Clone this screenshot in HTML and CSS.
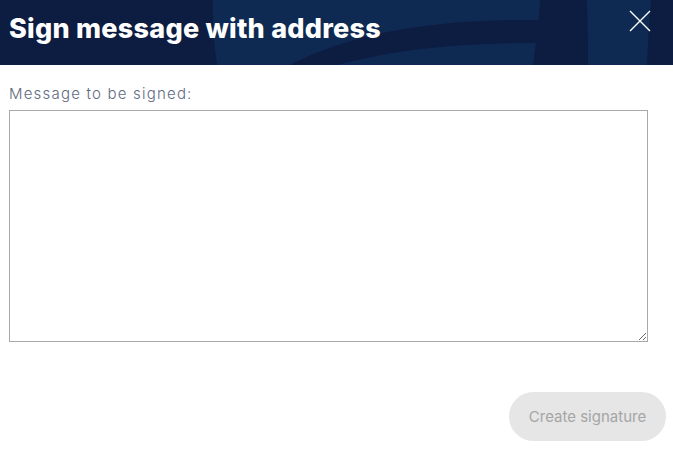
FILE: index.html
```html
<!DOCTYPE html>
<html>
<head>
<meta charset="utf-8">
<link rel="stylesheet" href="styles.css">
</head>
<body>
<div class="modal">
  <header class="modal-header">
    <svg class="header-bg" viewBox="0 0 673 65" preserveAspectRatio="none" aria-hidden="true">
      <path class="light" d="M213 0 H651 Q648 35 647 65 H217 Q212 30 213 0 Z"/>
      <path class="dark" d="M540 0 H587 Q588 35 588 65 H533 Q538 30 540 0 Z"/>
      <path class="dark" d="M290 65 Q380 18 540 20 L540 43 Q420 42 337 65 Z"/>
    </svg>
    <h1 class="title">Sign message with address</h1>
    <button class="close" aria-label="Close">
      <svg viewBox="0 0 22 22" width="22" height="22"><path d="M1 1 L21 21 M21 1 L1 21" stroke="#fff" stroke-width="1.4" fill="none"/></svg>
    </button>
  </header>
  <main class="modal-body">
    <label class="label" for="msg">Message to be signed:</label>
    <textarea id="msg" class="message"></textarea>
    <div class="actions">
      <button class="btn-sign" disabled>Create signature</button>
    </div>
  </main>
</div>
</body>
</html>
```

FILE: styles.css
```css
* { box-sizing: border-box; }
html, body { margin: 0; padding: 0; background: #fff; }
body { font-family: "Inter", "Open Sans", sans-serif; }
.modal { width: 673px; }
.modal-header {
  position: relative;
  height: 65px;
  background: #0d1c41;
  display: flex;
  align-items: center;
  padding-left: 9px;
  overflow: hidden;
}
.header-bg { position: absolute; inset: 0; width: 100%; height: 100%; }
.header-bg .light { fill: #0e2a53; }
.header-bg .dark { fill: #0d1c41; }
.title {
  position: relative;
  margin: 0 0 8px 0;
  color: #fff;
  font-size: 27px;
  font-weight: 800;
  letter-spacing: 0.25px;
}
.close {
  position: absolute;
  top: 10px;
  left: 629px;
  padding: 0;
  border: 0;
  background: none;
  width: 22px;
  height: 22px;
}
.close svg { display: block; }
.modal-body { padding: 20px 25px 0 9px; display: flex; flex-direction: column; }
.label { color: #5e6a80; font-size: 15px; font-weight: 300; line-height: 17px; margin-bottom: 8px; letter-spacing: 1.2px; }
.message {
  width: 639px;
  height: 232px;
  border: 1px solid #a9a9a9;
  border-radius: 0;
  resize: both;
  margin: 0;
}
.actions { display: flex; justify-content: flex-end; margin-top: 50px; margin-right: -18px; }
.btn-sign {
  width: 157px;
  height: 49px;
  border: 0;
  border-radius: 25px;
  background: #e6e6e6;
  color: #a5a5a5;
  font-family: "Inter", sans-serif;
  font-size: 15px;
  font-weight: 400;
}
```
